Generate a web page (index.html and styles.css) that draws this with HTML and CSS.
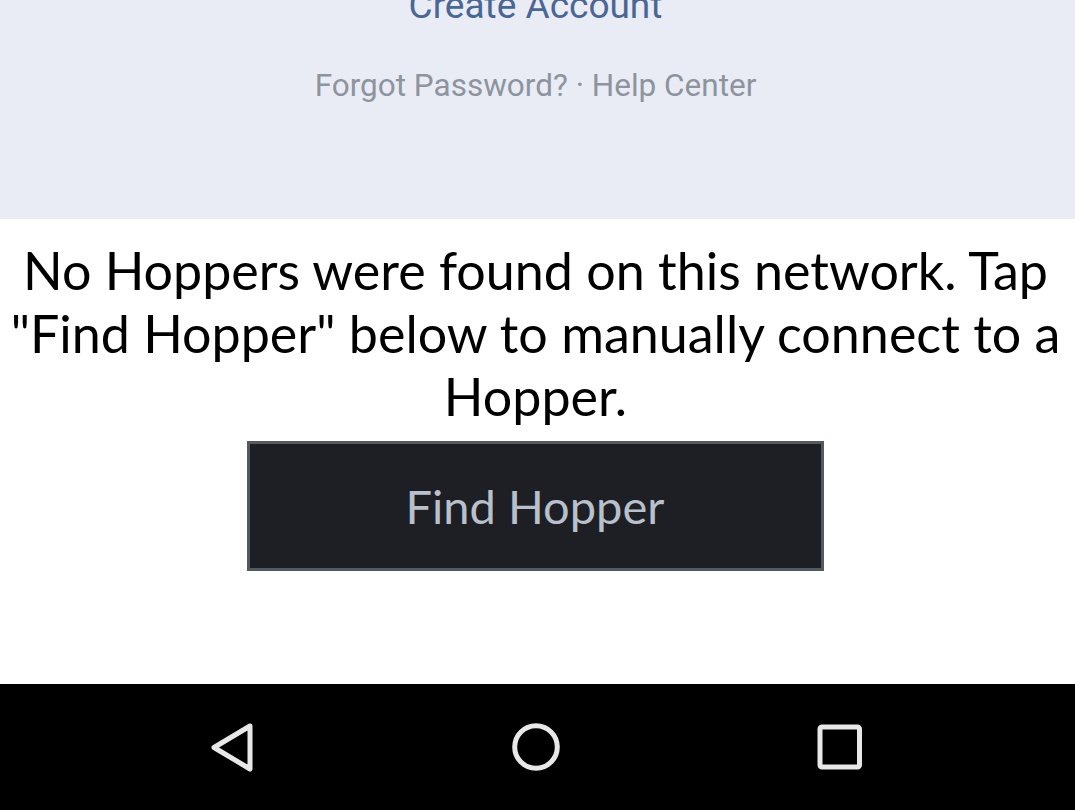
FILE: index.html
```html
<!DOCTYPE html>
<html>
<head>
<meta charset="utf-8">
<link rel="stylesheet" href="styles.css">
</head>
<body>
<div class="screen">
  <section class="login">
    <a class="create">Create Account</a>
    <div class="links"><span>Forgot Password?</span> · <span>Help Center</span></div>
  </section>
  <section class="main">
    <p class="message">No Hoppers were found on this network. Tap "Find Hopper" below to manually connect to a Hopper.</p>
    <button class="find">Find Hopper</button>
  </section>
  <nav class="navbar">
    <svg class="nav-icon" width="60" height="60" viewBox="0 0 60 60"><path d="M48 9 L12 30.5 L48 52 Z" fill="none" stroke="#e8e8e8" stroke-width="5" stroke-linejoin="round"/></svg>
    <svg class="nav-icon" width="60" height="60" viewBox="0 0 60 60"><circle cx="30" cy="30" r="21.3" fill="none" stroke="#e8e8e8" stroke-width="5"/></svg>
    <svg class="nav-icon" width="60" height="60" viewBox="0 0 60 60"><rect x="10" y="10" width="39.5" height="40" rx="2" fill="none" stroke="#e8e8e8" stroke-width="5"/></svg>
  </nav>
</div>
</body>
</html>
```
FILE: styles.css
```css
html, body {
  margin: 0;
  padding: 0;
  background: #ffffff;
}
.screen {
  width: 1075px;
  height: 810px;
  display: flex;
  flex-direction: column;
  overflow: hidden;
}
.login {
  height: 219px;
  padding-right: 4px;
  background: #e9ecf5;
  display: flex;
  flex-direction: column;
  align-items: center;
  font-family: Roboto, "Liberation Sans", sans-serif;
}
.create {
  display: block;
  margin-top: -19px;
  font-size: 37px;
  line-height: 50px;
  color: #4a6695;
}
.links {
  margin-top: 37px;
  font-size: 31.5px;
  line-height: 36px;
  color: #8d949e;
}
.main {
  flex: 1;
  display: flex;
  flex-direction: column;
  align-items: center;
  padding-top: 20px;
  padding-right: 4px;
}
.message {
  margin: 0;
  padding: 0 4px;
  font-family: Lato, "Open Sans", sans-serif;
  font-size: 52px;
  line-height: 63px;
  color: #000000;
  text-align: center;
}
.find {
  margin-top: 13px;
  margin-right: 1px;
  width: 577px;
  height: 130px;
  background: #1d1f24;
  border: 3px solid #555a61;
  color: #b8c0cc;
  font-family: Lato, "Open Sans", sans-serif;
  font-size: 47px;
  padding: 0;
}
.navbar {
  height: 126px;
  padding-right: 4px;
  background: #000000;
  display: flex;
  align-items: center;
  justify-content: center;
  gap: 244px;
}
.nav-icon {
  display: block;
}
```
